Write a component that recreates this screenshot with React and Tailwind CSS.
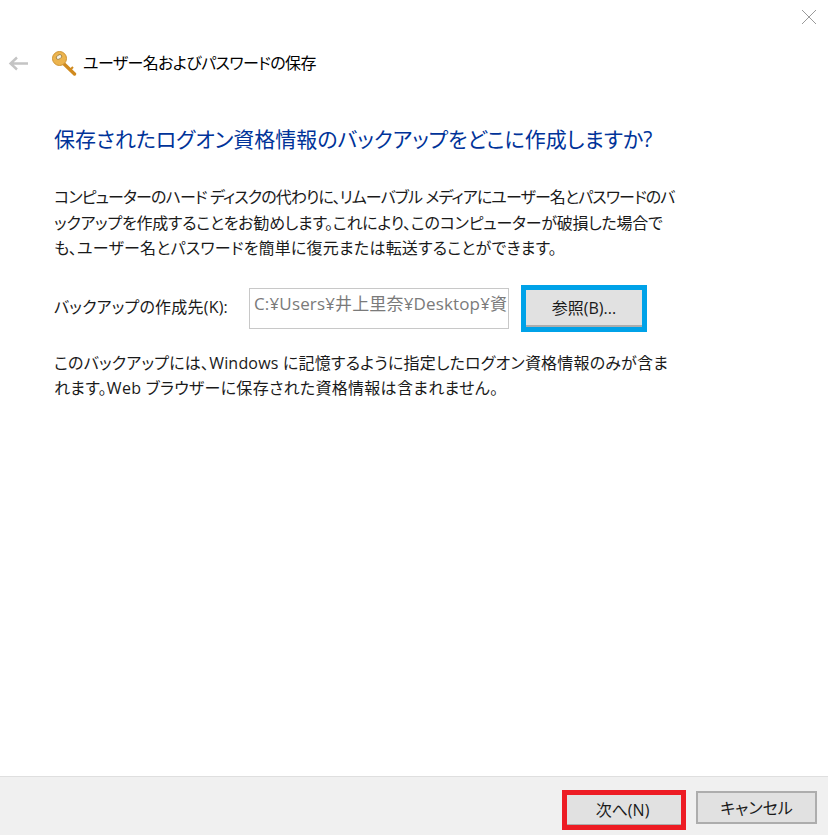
import React from "react";

const font = "font-['Open_Sans','Noto_Sans_CJK_JP',sans-serif]";

const App = () => {
  return (
    <div className={`w-[828px] h-[835px] bg-white flex flex-col overflow-hidden [font-feature-settings:'palt'] ${font}`}>
      {/* close */}
      <div className="h-[46px] flex justify-end pt-[9px] pr-[11px]">
        <svg width="16" height="16" viewBox="0 0 16 16" className="text-[#9a9a9a]">
          <path d="M1 1L15 15M15 1L1 15" stroke="currentColor" strokeWidth="1" fill="none" />
        </svg>
      </div>

      {/* header */}
      <div className="h-[34px] flex items-center pl-[8px]">
        <svg width="21" height="15" viewBox="0 0 21 15" className="text-[#c4c4c4]">
          <path d="M20 7.5H3M9 1.5L2.5 7.5L9 13.5" stroke="currentColor" strokeWidth="2.4" fill="none" />
        </svg>
        <svg width="26" height="26" viewBox="0 0 26 26" className="ml-[22px]">
          <path d="M11 12L23.5 24" stroke="#d08a1e" strokeWidth="3.4" strokeLinecap="round" fill="none" />
          <path d="M19 20L22 17" stroke="#d08a1e" strokeWidth="2" fill="none" />
          <circle cx="8.5" cy="8.5" r="7" fill="#ecb44e" stroke="#cf9433" strokeWidth="1" />
          <ellipse cx="8" cy="7" rx="3" ry="2" transform="rotate(-35 8 7)" fill="#f6f2e6" stroke="#9a7a3a" strokeWidth="0.8" />
        </svg>
        <span className="ml-[6px] text-[16px] leading-6 text-black tracking-[-0.6px]">ユーザー名およびパスワードの保存</span>
      </div>

      {/* content */}
      <div className="flex-1 pl-[54px]">
        <h1 className="mt-[43px] text-[21px] leading-[32px] font-normal text-[#003399] whitespace-nowrap">
          保存されたログオン資格情報のバックアップをどこに作成しますか?
        </h1>
        <div className="mt-[30px] text-[16px] leading-[25.5px] text-[#1a1a1a] whitespace-nowrap">
          <p className="tracking-[-0.9px]">コンピューターのハード ディスクの代わりに、リムーバブル メディアにユーザー名とパスワードのバ</p>
          <p className="tracking-[-0.25px]">ックアップを作成することをお勧めします。これにより、このコンピューターが破損した場合で</p>
          <p className="tracking-[0.2px]">も、ユーザー名とパスワードを簡単に復元または転送することができます。</p>
        </div>
        <div className="mt-[23px] flex items-center h-[47px]">
          <label className="w-[195px] pb-[3px] text-[16px] text-[#1a1a1a] whitespace-nowrap tracking-[0.2px]">バックアップの作成先(K):</label>
          <div className="w-[260px] h-[41px] border border-[#c8c8c8] flex items-center pl-[4px] pb-[8px] overflow-hidden text-[17px] text-[#7a7a7a] whitespace-nowrap tracking-[0.15px]">
            C:¥Users¥井上里奈¥Desktop¥資
          </div>
          <button className="ml-[12px] w-[126px] h-[47px] border-[5px] border-[#00a2e8] bg-[#e1e1e1] text-[16px] text-[#1a1a1a] shadow-[inset_0_-2px_0_#adadad]">
            参照(B)...
          </button>
        </div>
        <div className="mt-[19px] text-[16px] leading-[25.5px] text-[#1a1a1a] whitespace-nowrap">
          <p className="tracking-[0.2px]">このバックアップには、Windows に記憶するように指定したログオン資格情報のみが含ま</p>
          <p className="tracking-[0.3px]">れます。Web ブラウザーに保存された資格情報は含まれません。</p>
        </div>
      </div>

      {/* footer */}
      <div className="h-[59px] bg-[#f0f0f0] border-t border-[#dfdfdf] flex justify-end items-start pt-[13px] pr-[11px]">
        <button className="w-[124px] h-[40px] pr-[3px] border-[5px] border-[#ed1c24] bg-[#e1e1e1] text-[16px] text-[#1a1a1a] shadow-[inset_0_-1px_0_#adadad]">
          次へ(N)
        </button>
        <button className="ml-[10px] mt-[1px] w-[121px] h-[33px] border-2 border-[#adadad] bg-[#e1e1e1] text-[16px] text-[#1a1a1a]">
          キャンセル
        </button>
      </div>
    </div>
  );
};

export default App;
